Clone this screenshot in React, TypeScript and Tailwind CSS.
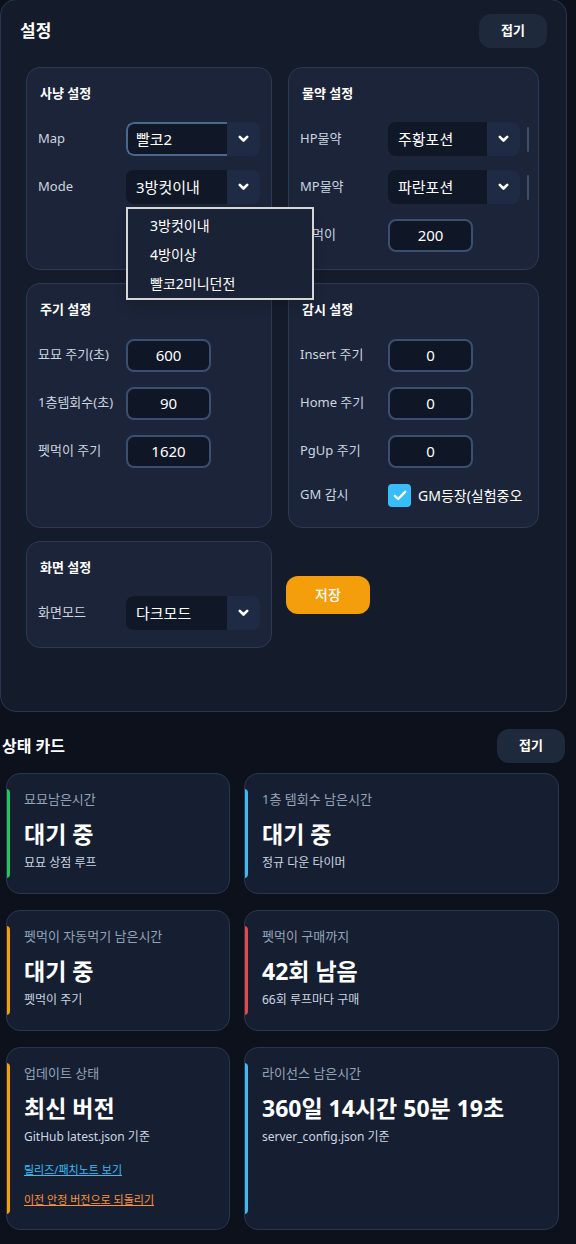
import React from 'react';
import clsx from 'clsx';

const Chevron: React.FC = () => (
  <svg width="11" height="8" viewBox="0 0 11 8" fill="none">
    <path d="M1.8 1.8 5.5 5.5 9.2 1.8" stroke="white" strokeWidth="2.6" strokeLinecap="round" strokeLinejoin="round" />
  </svg>
);

const Select: React.FC<{ value: string; focused?: boolean; w?: 'a' | 'b'; bar?: boolean }> = ({ value, focused, w = 'a', bar }) => (
  <div className="flex items-center">
    <div className={clsx('flex h-[34px] rounded-lg overflow-hidden', w === 'a' ? 'w-[134px]' : 'w-[132px]')}>
      <div
        className={clsx(
          'flex-1 flex items-center bg-[#101828] text-[15px] text-white',
          focused ? 'border-2 border-r-0 border-[#4a6790] rounded-l-lg pl-[8px]' : 'pl-[10px]'
        )}
      >
        {value}
      </div>
      <div className="w-[33px] bg-[#1f2a44] flex items-center justify-center">
        <Chevron />
      </div>
    </div>
    {bar && <div className="ml-[7px] w-[2px] h-[25px] rounded bg-[#3e4d68]" />}
  </div>
);

const Input: React.FC<{ value: string }> = ({ value }) => (
  <div className="w-[85px] h-[33px] rounded-lg border-2 border-[#3b4f6e] bg-[#0f1727] flex items-center justify-center text-[15px] text-white">
    {value}
  </div>
);

const Row: React.FC<{ label: string; children: React.ReactNode; h?: string }> = ({ label, children, h = 'h-[34px]' }) => (
  <div className={clsx('flex items-center', h)}>
    <div className="w-[88px] shrink-0 text-[13px] text-[#cbd5e1] whitespace-nowrap">{label}</div>
    {children}
  </div>
);

const Card: React.FC<{ title: string; children: React.ReactNode; className?: string }> = ({ title, children, className }) => (
  <div className={clsx('rounded-[14px] border border-[#2d3a54] bg-[#1b2438] px-[11px] pt-4', className ?? 'pb-[17px]')}>
    <div className="pl-[2px] text-[13px] font-bold text-white leading-[18px] mb-5">{title}</div>
    <div className="flex flex-col gap-[14px]">{children}</div>
  </div>
);

const StatusCard: React.FC<{
  color: string;
  label: string;
  value: string;
  sub: string;
  children?: React.ReactNode;
}> = ({ color, label, value, sub, children }) => (
  <div className="flex rounded-[14px] border border-[#2a3650] bg-[#161f32] overflow-hidden">
    <div className={clsx('w-[4px] -ml-px my-[15px] shrink-0 rounded-r-sm', color)} />
    <div className="pl-[14px] pt-4 pb-[22px] pr-3 min-w-0">
      <div className="text-[13px] leading-[18px] text-[#94a3b8]">{label}</div>
      <div className="mt-[11px] text-[23px] leading-[30px] font-bold text-white whitespace-nowrap">{value}</div>
      <div className="mt-[5px] text-[12px] leading-[17px] text-[#cbd5e1]">{sub}</div>
      {children}
    </div>
  </div>
);

const App: React.FC = () => {
  return (
    <div className="min-h-[1244px] bg-[#0c111b] font-['Noto_Sans','Noto_Sans_CJK_KR',sans-serif] overflow-hidden">
      {/* 설정 패널 */}
      <section className="w-[567px] -mt-px rounded-2xl border border-[#2a3650] bg-[#141c2c] pb-[63px]">
        <div className="flex items-center justify-between pt-[14px] pl-[19px] pr-[19px]">
          <h2 className="text-[17px] font-bold text-white">설정</h2>
          <button className="w-[68px] h-[34px] rounded-xl bg-[#1e293b] text-[13px] font-semibold text-white">접기</button>
        </div>

        <div className="ml-[25px] mt-[19px] grid grid-cols-[246px_251px] gap-x-4 gap-y-[13px]">
          <Card title="사냥 설정">
            <Row label="Map">
              <Select value="빨코2" focused />
            </Row>
            <Row label="Mode">
              <div className="relative">
                <Select value="3방컷이내" />
                <div className="absolute z-10 left-0 top-[37px] w-[188px] border-2 border-[#d6d6d6] bg-[#1a2236] pt-[2px] shadow-lg">
                  {['3방컷이내', '4방이상', '빨코2미니던전'].map((o) => (
                    <div key={o} className="h-[29px] flex items-center pl-[22px] text-[14px] text-white">
                      {o}
                    </div>
                  ))}
                </div>
              </div>
            </Row>
          </Card>

          <Card title="물약 설정">
            <Row label="HP물약">
              <Select value="주황포션" w="b" bar />
            </Row>
            <Row label="MP물약">
              <Select value="파란포션" w="b" bar />
            </Row>
            <Row label="펫먹이">
              <Input value="200" />
            </Row>
          </Card>

          <Card title="주기 설정">
            <Row label="묘묘 주기(초)">
              <Input value="600" />
            </Row>
            <Row label="1층템회수(초)">
              <Input value="90" />
            </Row>
            <Row label="펫먹이 주기">
              <Input value="1620" />
            </Row>
          </Card>

          <Card title="감시 설정" className="pb-[19px]">
            <Row label="Insert 주기">
              <Input value="0" />
            </Row>
            <Row label="Home 주기">
              <Input value="0" />
            </Row>
            <Row label="PgUp 주기">
              <Input value="0" />
            </Row>
            <Row label="GM 감시" h="h-[26px]">
              <div className="flex items-center gap-[7px] whitespace-nowrap">
                <div className="w-[23px] h-[23px] shrink-0 rounded-[4px] bg-[#38bdf8] flex items-center justify-center">
                  <svg width="14" height="11" viewBox="0 0 14 11" fill="none">
                    <path d="M1.8 5.8 5.2 9 12.2 1.8" stroke="white" strokeWidth="2.4" strokeLinecap="round" strokeLinejoin="round" />
                  </svg>
                </div>
                <span className="text-[14px] text-white">GM등장(실험중오</span>
              </div>
            </Row>
          </Card>

          <Card title="화면 설정">
            <Row label="화면모드">
              <Select value="다크모드" />
            </Row>
          </Card>

          <div className="flex items-center -ml-[2px]">
            <button className="w-[84px] h-[38px] rounded-xl bg-[#f59e0b] text-[14px] font-medium text-white">저장</button>
          </div>
        </div>
      </section>

      {/* 상태 카드 */}
      <section className="mt-[17px]">
        <div className="flex items-center justify-between pl-[2px] pr-[11px]">
          <h2 className="text-[16px] font-bold text-white">상태 카드</h2>
          <button className="w-[68px] h-[34px] rounded-xl bg-[#1e293b] text-[13px] font-semibold text-white">접기</button>
        </div>

        <div className="mt-[10px] ml-[6px] grid grid-cols-[224px_315px] gap-x-[14px] gap-y-4">
          <StatusCard color="bg-[#22c55e]" label="묘묘남은시간" value="대기 중" sub="묘묘 상점 루프" />
          <StatusCard color="bg-[#38bdf8]" label="1층 템회수 남은시간" value="대기 중" sub="정규 다운 타이머" />
          <StatusCard color="bg-[#f59e0b]" label="펫먹이 자동먹기 남은시간" value="대기 중" sub="펫먹이 주기" />
          <StatusCard color="bg-[#ef4444]" label="펫먹이 구매까지" value="42회 남음" sub="66회 루프마다 구매" />
          <StatusCard color="bg-[#f59e0b]" label="업데이트 상태" value="최신 버전" sub="GitHub latest.json 기준">
            <div className="mt-[17px] text-[11px] leading-[15px] text-[#38bdf8] underline">릴리즈/패치노트 보기</div>
            <div className="mt-[15px] text-[11px] leading-[15px] text-[#fb923c] underline">이전 안정 버전으로 되돌리기</div>
          </StatusCard>
          <StatusCard color="bg-[#38bdf8]" label="라이선스 남은시간" value="360일 14시간 50분 19초" sub="server_config.json 기준" />
        </div>
      </section>
    </div>
  );
};

export default App;
